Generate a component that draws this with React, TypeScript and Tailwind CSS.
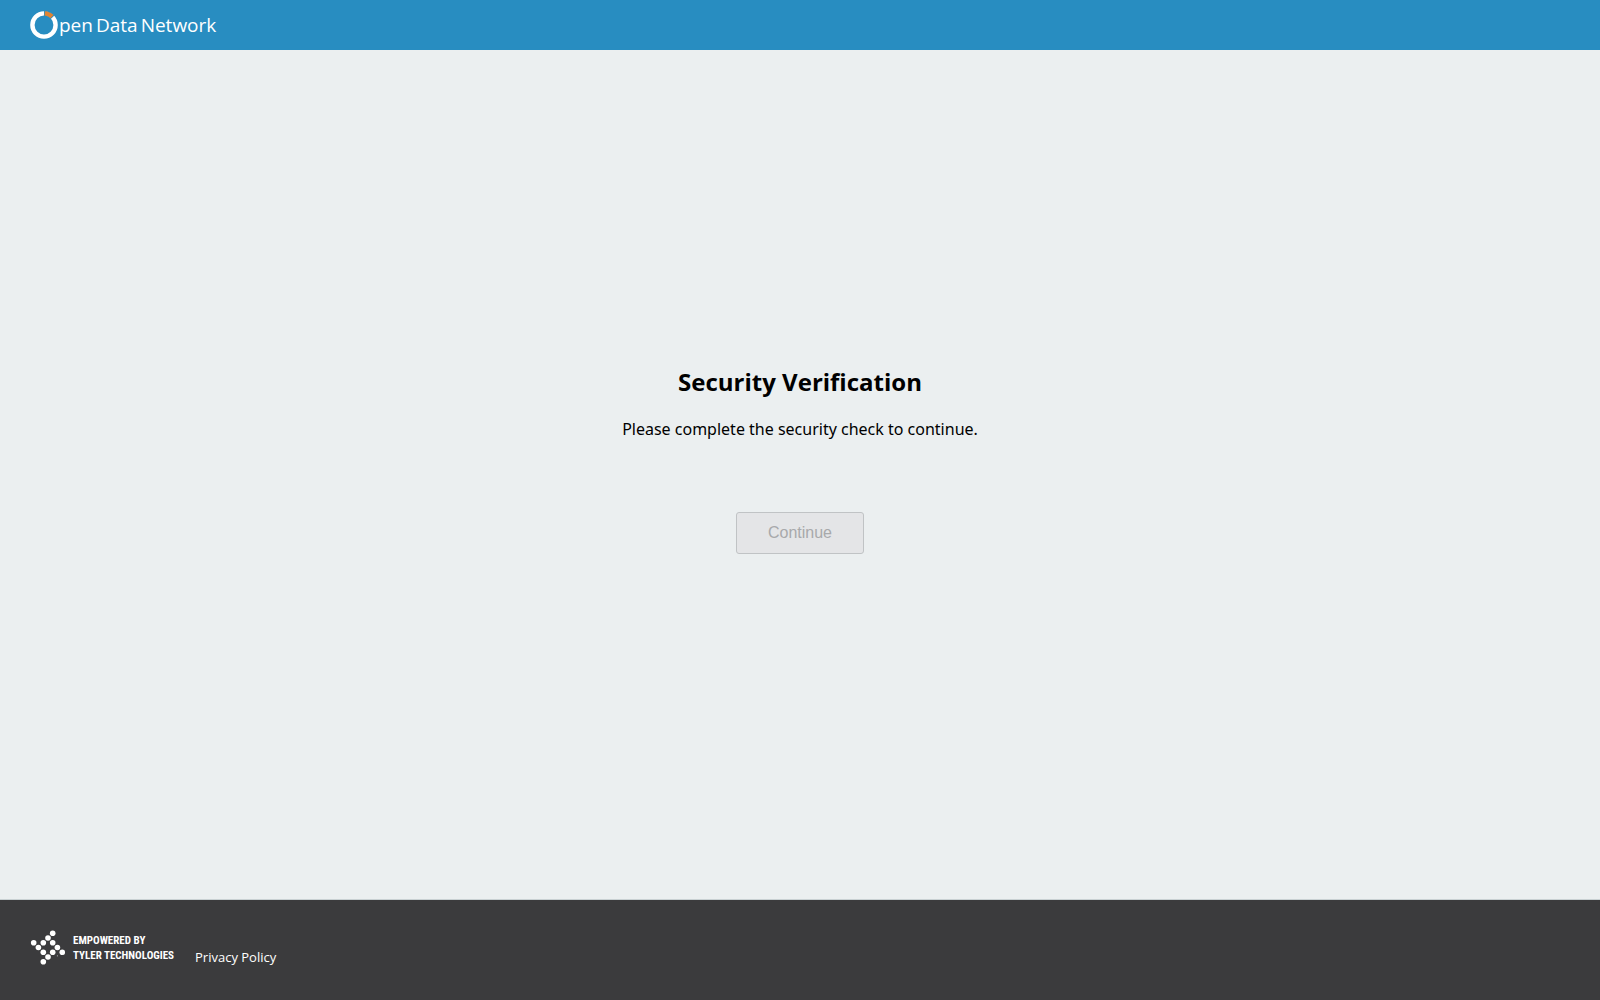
const dots: [number, number][] = [
  [22.7, 3.3], [18, 8], [13.3, 12.8], [22.7, 12.8], [3.7, 12.8], [8.4, 17.5],
  [27.4, 17.5], [13.3, 22.2], [22.7, 22.2], [32.3, 22.2], [18, 27], [13.3, 31.7],
];

function Logo() {
  return (
    <a href="#" aria-label="Open Data Network" className="flex items-center gap-px text-[19px] leading-7 text-white">
      <svg width="28" height="28" viewBox="0 0 28 28" fill="none" aria-hidden="true">
        <circle cx="14" cy="14" r="11.6" stroke="#ffffff" strokeWidth="4.4" />
        <path d="M14 2.4A11.6 11.6 0 0 1 22.6 6.2" stroke="#288dc1" strokeWidth="5" />
        <path d="M14.8 2.4A11.6 11.6 0 0 1 22 5.6" stroke="#e08433" strokeWidth="4.4" />
      </svg>
      <span className="flex gap-[3px]">
        <span>pen</span>
        <span>Data</span>
        <span>Network</span>
      </span>
    </a>
  );
}

function TylerLogo() {
  return (
    <a href="#" className="flex items-center gap-2 pb-px text-white">
      <svg width="35" height="35" viewBox="0 0 35 35" fill="currentColor" aria-hidden="true">
        {dots.map(([x, y]) => (
          <circle key={`${x}-${y}`} cx={x} cy={y} r="2.8" />
        ))}
        <circle cx="27.4" cy="25.8" r="0.6" opacity="0.6" />
      </svg>
      <span className="font-['Roboto_Condensed','Liberation_Sans_Narrow',sans-serif] text-[11px] leading-[15px] font-bold whitespace-nowrap">
        EMPOWERED BY
        <br />
        TYLER TECHNOLOGIES
      </span>
    </a>
  );
}

export default function App() {
  return (
    <div className="flex min-h-screen flex-col bg-[#ebeff0] font-['Open_Sans',sans-serif] text-black">
      <header className="flex h-[50px] items-center bg-[#288dc1] px-[30px]">
        <Logo />
      </header>
      <main className="flex flex-1 flex-col items-center justify-center px-4 pb-[29px]">
        <h1 className="text-2xl leading-8 font-bold">Security Verification</h1>
        <p className="mt-5 font-['Noto_Sans',sans-serif] text-base leading-[22px]">Please complete the security check to continue.</p>
        <button
          type="button"
          disabled
          className="mt-[72px] h-[42px] w-32 rounded-[3px] border border-[#c0c3c5] bg-[#e4e5e7] font-['Liberation_Sans',sans-serif] text-base text-[#a8a9ab]"
        >
          Continue
        </button>
      </main>
      <footer className="flex items-end gap-[21px] border-t border-[#c9d1d3] bg-[#3b3b3d] px-[30px] pt-[30px] pb-[34px]">
        <TylerLogo />
        <a href="#" className="text-[13px] leading-[18px] text-white">Privacy Policy</a>
      </footer>
    </div>
  );
}
